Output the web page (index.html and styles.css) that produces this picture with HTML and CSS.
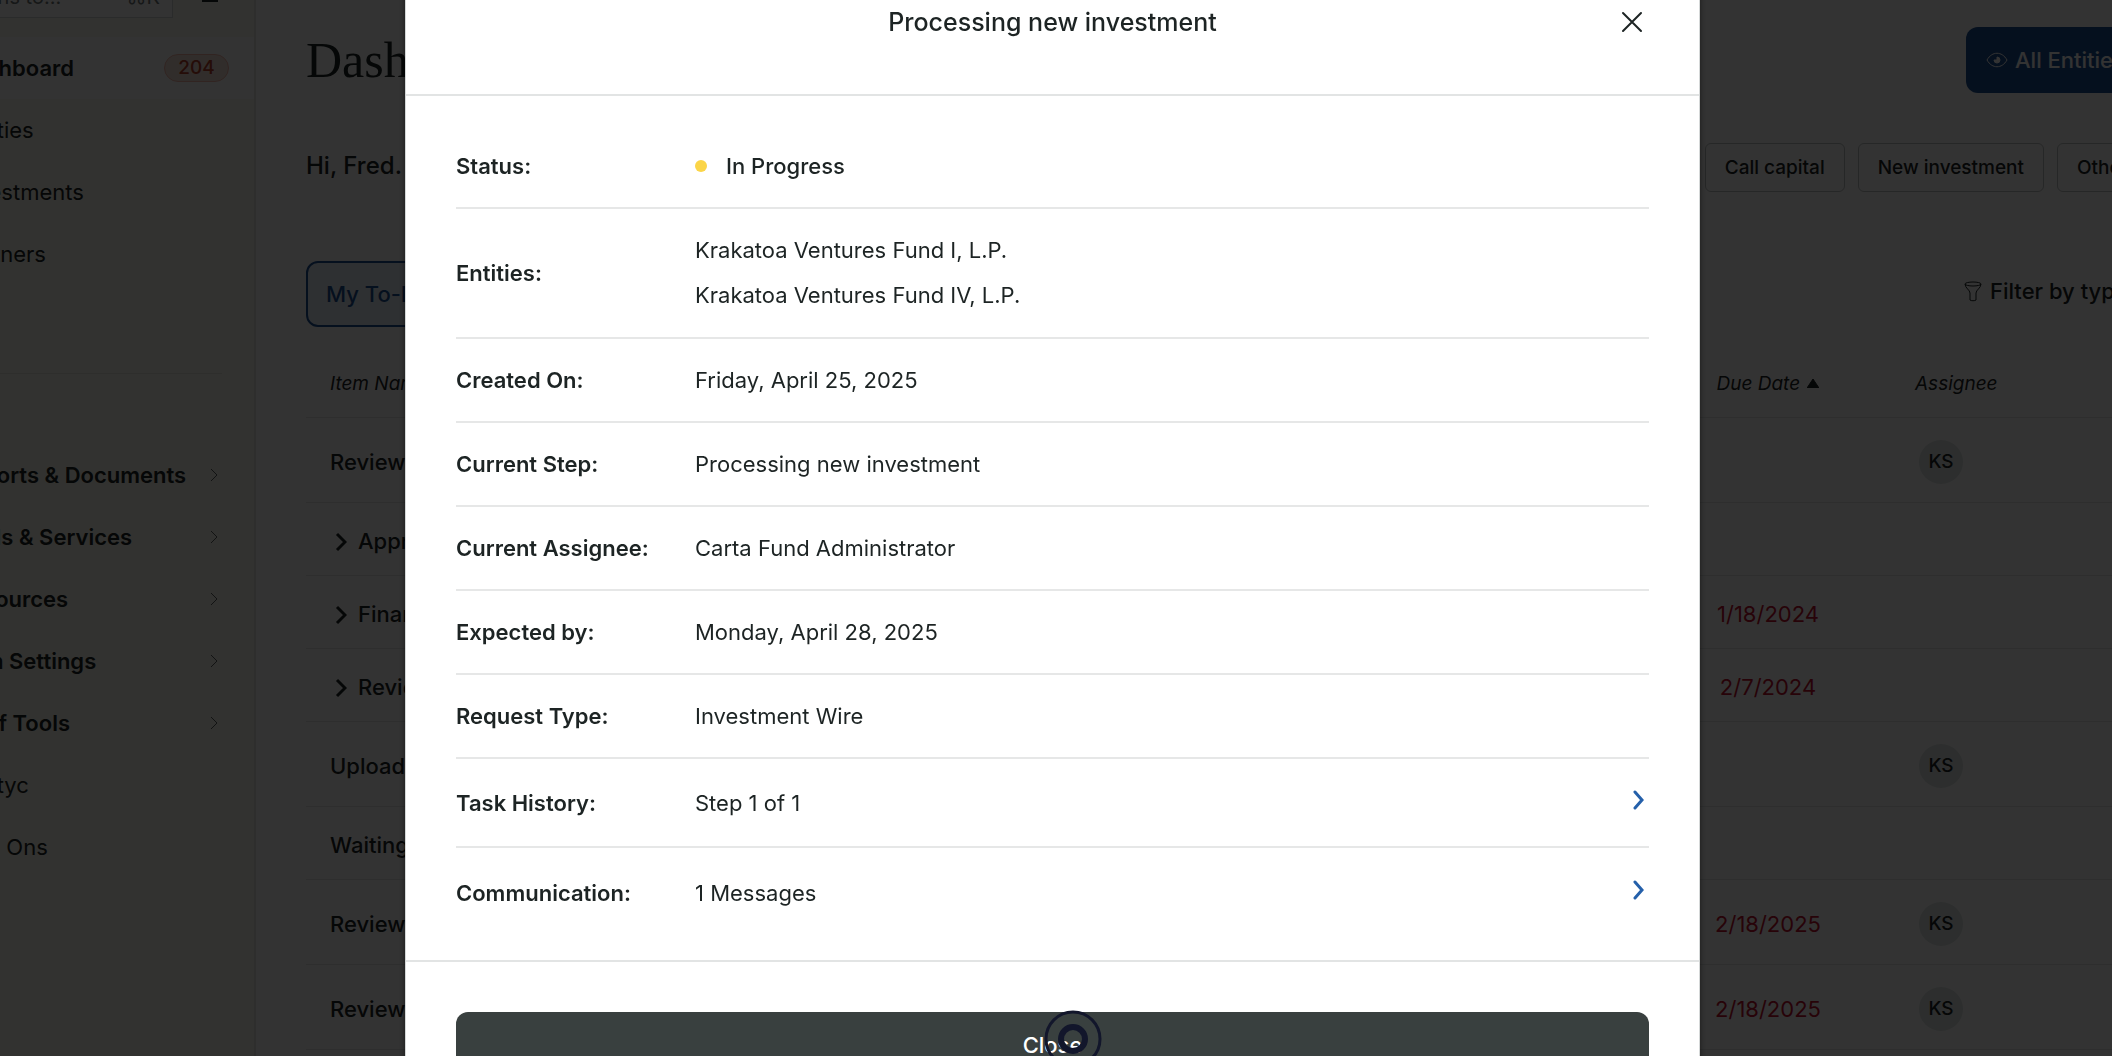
FILE: index.html
```html
<!DOCTYPE html>
<html lang="en">
<head>
  <meta charset="UTF-8" />
  <meta name="viewport" content="width=device-width, initial-scale=1.0"/>
  <title>Dashboard</title>
  <link rel="stylesheet" href="styles.css">
</head>
<body>

  <div class="app">

    <!-- Sidebar -->
    <aside class="sidebar">
      <div class="search-row">
        <label class="search">
          <input type="text" placeholder="Actions to..." aria-label="Search" />
          <span class="shortcut">⌘K</span>
        </label>
        <button class="menu-button" aria-label="Menu">
          <svg width="16" height="16" viewBox="0 0 16 16"><path d="M0 2H16M0 8H16M0 15H16" /></svg>
        </button>
      </div>

      <nav class="nav">
        <a class="nav-item active" href="#">Dashboard <span class="badge">204</span></a>
        <a class="nav-item" href="#">Entities</a>
        <a class="nav-item" href="#">Investments</a>
        <a class="nav-item" href="#">Partners</a>
      </nav>
      <hr class="nav-divider" />
      <nav class="nav">
        <a class="nav-item group" href="#">Reports &amp; Documents <svg class="chevron" viewBox="0 0 8 16"><path d="M1 2L7 8L1 14" /></svg></a>
        <a class="nav-item group" href="#">Tools &amp; Services <svg class="chevron" viewBox="0 0 8 16"><path d="M1 2L7 8L1 14" /></svg></a>
        <a class="nav-item group" href="#">Resources <svg class="chevron" viewBox="0 0 8 16"><path d="M1 2L7 8L1 14" /></svg></a>
        <a class="nav-item group" href="#">Firm Settings <svg class="chevron" viewBox="0 0 8 16"><path d="M1 2L7 8L1 14" /></svg></a>
        <a class="nav-item group" href="#">Staff Tools <svg class="chevron" viewBox="0 0 8 16"><path d="M1 2L7 8L1 14" /></svg></a>
        <a class="nav-item" href="#">Entityc</a>
        <a class="nav-item" href="#">Add Ons</a>
      </nav>
    </aside>

    <!-- Main content -->
    <main class="main">
      <div class="title-row">
        <h1>Dashboard</h1>
        <button class="entities-button">
          <svg width="22" height="16" viewBox="0 0 22 16">
            <path d="M1 8C6 -1 16 -1 21 8C16 17 6 17 1 8Z" />
            <path class="pupil" d="M11 5A3 3 0 1 1 8 8L11 8Z" />
          </svg>
          All Entities
        </button>
      </div>

      <div class="greeting-row">
        <p class="greeting">Hi, Fred.</p>
        <div class="quick-actions">
          <button>Call capital</button>
          <button>New investment</button>
          <button>Other</button>
        </div>
      </div>

      <div class="tabs-row">
        <button class="tab">My To-Dos</button>
        <button class="filter-button">
          <svg width="18" height="21" viewBox="0 0 18 21">
            <ellipse cx="9" cy="3" rx="8" ry="2" />
            <path d="M1 3C1 7 6 9 6 12V19C7 20 11 20 12 19V12C12 9 17 7 17 3" />
          </svg>
          Filter by type
        </button>
      </div>

      <table class="todos">
        <thead>
          <tr>
            <th>Item Name</th>
            <th class="due">Due Date <svg width="12" height="9" viewBox="0 0 12 9"><path d="M0 9L6 0L12 9Z" /></svg></th>
            <th class="assignee">Assignee</th>
          </tr>
        </thead>
        <tbody>
          <tr class="tall"><td>Review</td><td class="due"></td><td class="assignee"><span class="avatar">KS</span></td></tr>
          <tr><td class="expandable"><svg width="12" height="20" viewBox="0 0 12 20"><path d="M2 2L10 10L2 18" /></svg>Approve</td><td class="due"></td><td class="assignee"></td></tr>
          <tr><td class="expandable"><svg width="12" height="20" viewBox="0 0 12 20"><path d="M2 2L10 10L2 18" /></svg>Financials</td><td class="due">1/18/2024</td><td class="assignee"></td></tr>
          <tr><td class="expandable"><svg width="12" height="20" viewBox="0 0 12 20"><path d="M2 2L10 10L2 18" /></svg>Review</td><td class="due">2/7/2024</td><td class="assignee"></td></tr>
          <tr class="tall"><td>Upload</td><td class="due"></td><td class="assignee"><span class="avatar">KS</span></td></tr>
          <tr><td>Waiting</td><td class="due"></td><td class="assignee"></td></tr>
          <tr class="tall"><td>Review</td><td class="due">2/18/2025</td><td class="assignee"><span class="avatar">KS</span></td></tr>
          <tr class="tall"><td>Review</td><td class="due">2/18/2025</td><td class="assignee"><span class="avatar">KS</span></td></tr>
        </tbody>
      </table>
    </main>
  </div>

  <!-- Request details modal -->
  <div class="overlay">
    <div class="modal" role="dialog" aria-labelledby="modalTitle">
      <div class="modal-header">
        <h2 id="modalTitle">Processing new investment</h2>
        <button class="close-icon" aria-label="Close">
          <svg width="22" height="22" viewBox="0 0 22 22"><path d="M2 2L20 20M20 2L2 20" /></svg>
        </button>
      </div>

      <dl class="details">
        <div class="row">
          <dt>Status:</dt>
          <dd class="status"><span class="dot"></span>In Progress</dd>
        </div>
        <div class="row entities">
          <dt>Entities:</dt>
          <dd>Krakatoa Ventures Fund I, L.P.<br />Krakatoa Ventures Fund IV, L.P.</dd>
        </div>
        <div class="row">
          <dt>Created On:</dt>
          <dd>Friday, April 25, 2025</dd>
        </div>
        <div class="row">
          <dt>Current Step:</dt>
          <dd>Processing new investment</dd>
        </div>
        <div class="row">
          <dt>Current Assignee:</dt>
          <dd>Carta Fund Administrator</dd>
        </div>
        <div class="row">
          <dt>Expected by:</dt>
          <dd>Monday, April 28, 2025</dd>
        </div>
        <div class="row">
          <dt>Request Type:</dt>
          <dd>Investment Wire</dd>
        </div>
        <div class="row link-row">
          <dt>Task History:</dt>
          <dd>Step 1 of 1 <button class="expand" aria-label="Show task history"><svg width="12" height="24" viewBox="0 0 12 24"><path d="M2 4L9 12L2 20" /></svg></button></dd>
        </div>
        <div class="row link-row">
          <dt>Communication:</dt>
          <dd>1 Messages <button class="expand" aria-label="Show messages"><svg width="12" height="24" viewBox="0 0 12 24"><path d="M2 4L9 12L2 20" /></svg></button></dd>
        </div>
      </dl>

      <div class="modal-footer">
        <button class="close-button">
          Close
          <svg class="click-ring" width="58" height="58" viewBox="0 0 58 58">
            <circle cx="29" cy="29" r="27" stroke-width="3" />
            <circle cx="29" cy="29" r="12" stroke-width="6" />
          </svg>
        </button>
      </div>
    </div>
  </div>

</body>
</html>
```

FILE: styles.css
```css
* {
  box-sizing: border-box;
}

html, body {
  height: 100%;
  margin: 0;
  overflow: hidden;
  font-family: Inter, "Liberation Sans", sans-serif;
  font-size: 22px;
  color: #1d2424;
}

button {
  font-family: inherit;
  color: inherit;
  background: none;
  border: none;
  padding: 0;
  cursor: pointer;
}

svg {
  fill: none;
  stroke: currentColor;
}

/* the app runs past the window on the left, top and right */
.app {
  display: flex;
  width: calc(100% + 204px);
  margin: -30px -120px 0 -84px;
  background-color: #ffffff;
}

/* Sidebar */
.sidebar {
  flex: none;
  width: 340px;
  min-height: calc(100vh + 30px);
  background-color: #faf9ee;
  border-right: 2px solid #e6e6e0;
}

.search-row {
  display: flex;
  align-items: center;
  justify-content: space-between;
  padding: 0 36px 19px 20px;
}

.search {
  display: flex;
  align-items: center;
  width: 237px;
  height: 48px;
  padding: 6px 12px 0;
  border: 1px solid #d0d4d4;
  background-color: #ffffff;
}

.search input {
  flex: 1;
  min-width: 0;
  border: none;
  padding: 0;
  font-family: inherit;
  font-size: 20px;
  background: none;
}

.search input::placeholder,
.shortcut {
  color: #6f7777;
}

.shortcut {
  font-size: 20px;
}

.menu-button svg {
  display: block;
  stroke-width: 2;
}

.nav-item {
  display: flex;
  align-items: center;
  justify-content: space-between;
  height: 62px;
  padding: 0 36px 0 42px;
  color: #1d2424;
  text-decoration: none;
}

.nav-item.group,
.nav-item.active {
  font-weight: 600;
}

.nav-item.group {
  padding-left: 40px;
}

.nav-item.active {
  padding-right: 25px;
  background-color: #ffffff;
}

.badge {
  width: 65px;
  height: 28px;
  border: 1px solid #f2b5a7;
  border-radius: 14px;
  background-color: #f6ded5;
  color: #b8402c;
  font-size: 19px;
  font-weight: 500;
  line-height: 26px;
  text-align: center;
}

.chevron {
  width: 8px;
  height: 16px;
  color: #5c6262;
}

.nav-divider {
  margin: 88px 32px 70px 40px;
  border: none;
  border-top: 1px solid #e6e6dc;
}

/* Main content */
.main {
  flex: 1;
  padding: 57px 48px 0 50px;
}

.title-row,
.greeting-row,
.tabs-row {
  display: flex;
  align-items: center;
  justify-content: space-between;
}

h1 {
  margin: 0;
  font-family: "Liberation Serif", serif;
  font-size: 50px;
  font-weight: 400;
  line-height: 66px;
}

.entities-button {
  display: flex;
  align-items: center;
  gap: 7px;
  width: 218px;
  height: 66px;
  padding: 0 20px;
  border-radius: 12px;
  background-color: #1d5096;
  color: #ffffff;
  font-size: 22px;
  font-weight: 500;
  white-space: nowrap;
}

.pupil {
  fill: currentColor;
}

.greeting-row {
  margin: 50px 0 69px;
}

.greeting {
  margin: 0;
  padding-bottom: 4px;
  font-size: 24px;
  font-weight: 500;
}

.quick-actions {
  display: flex;
  gap: 13px;
}

.quick-actions button {
  height: 49px;
  min-width: 127px;
  padding: 0 19px;
  border: 1px solid #bcc0c0;
  border-radius: 6px;
  font-size: 19px;
  font-weight: 500;
  text-align: left;
}

.tab {
  width: 180px;
  height: 66px;
  padding: 0 18px;
  border: 2px solid #1d5096;
  border-radius: 12px;
  background-color: #e6eef8;
  color: #1d5096;
  font-size: 22px;
  font-weight: 500;
  text-align: left;
}

.filter-button {
  display: flex;
  align-items: center;
  gap: 8px;
  width: 220px;
  padding-bottom: 6px;
  font-size: 22px;
  font-weight: 500;
}

.todos {
  width: 100%;
  margin-top: 24px;
  border-collapse: collapse;
  table-layout: fixed;
}

.todos th {
  height: 66px;
  font-size: 19px;
  font-style: italic;
  font-weight: 400;
  text-align: left;
}

.todos th svg {
  margin-left: 2px;
  vertical-align: 2px;
  fill: currentColor;
}

.todos th,
.todos td {
  padding: 0 24px;
  border-bottom: 1px solid #e4e7e7;
}

.todos td {
  height: 73px;
  padding-top: 4px;
  font-weight: 500;
}

.todos .tall td {
  height: 85px;
}

.todos .due {
  width: 246px;
  text-align: center;
}

.todos td.due {
  color: #c4112f;
  font-weight: 400;
}

.todos .assignee {
  width: 293px;
}

.expandable svg {
  margin: 0 11px 0 5px;
  vertical-align: -3px;
  stroke-width: 3;
}

.avatar {
  display: block;
  width: 44px;
  height: 44px;
  margin-left: 4px;
  border-radius: 50%;
  background-color: #dfe6e5;
  font-size: 19px;
  line-height: 44px;
  text-align: center;
}

/* Modal */
.overlay {
  position: fixed;
  inset: 0;
  display: flex;
  justify-content: center;
  align-items: flex-start;
  padding-right: 7px;
  overflow: hidden;
  background-color: rgba(0, 0, 0, 0.8);
}

.modal {
  width: 90%;
  max-width: 1295px;
  margin-top: -51px;
  border: 1px solid #d5d8d8;
  border-radius: 6px;
  background-color: #ffffff;
  box-shadow: 0 0 6px rgba(0, 0, 0, 0.5);
}

.modal-header {
  display: grid;
  grid-template-columns: 1fr auto 1fr;
  align-items: center;
  height: 146px;
  padding: 0 56px;
  border-bottom: 2px solid #e2e4e4;
}

.modal-header h2 {
  grid-column: 2;
  margin: 0;
  font-size: 25px;
  font-weight: 500;
}

.close-icon {
  justify-self: end;
}

.close-icon svg {
  display: block;
  stroke-width: 2;
  stroke-linecap: round;
}

.details {
  margin: 0;
  padding: 29px 50px 23px;
}

.row {
  display: grid;
  grid-template-columns: 239px 1fr;
  align-items: center;
  min-height: 84px;
  border-bottom: 2px solid #e6e7e7;
}

.row:last-child {
  border-bottom: none;
}

.entities {
  min-height: 130px;
}

.link-row {
  min-height: 89px;
}

dt {
  font-weight: 600;
}

dd {
  display: flex;
  align-items: center;
  justify-content: space-between;
  margin: 0;
}

.entities dd {
  display: block;
  line-height: 45px;
}

.status {
  justify-content: flex-start;
  gap: 19px;
  font-weight: 500;
}

.dot {
  width: 12px;
  height: 12px;
  border-radius: 50%;
  background-color: #fbd548;
}

.expand {
  padding: 0 4px 6px 0;
  color: #2560aa;
}

.expand svg {
  display: block;
  stroke-width: 3;
  stroke-linecap: round;
}

.modal-footer {
  padding: 50px;
  border-top: 2px solid #e2e4e4;
}

.close-button {
  position: relative;
  width: 100%;
  height: 66px;
  border-radius: 12px;
  background-color: #39403f;
  color: #ffffff;
  font-size: 22px;
  font-weight: 500;
}

/* pointer ring over the button */
.click-ring {
  position: absolute;
  top: -2px;
  left: calc(50% - 9px);
  color: #12162b;
}
```
